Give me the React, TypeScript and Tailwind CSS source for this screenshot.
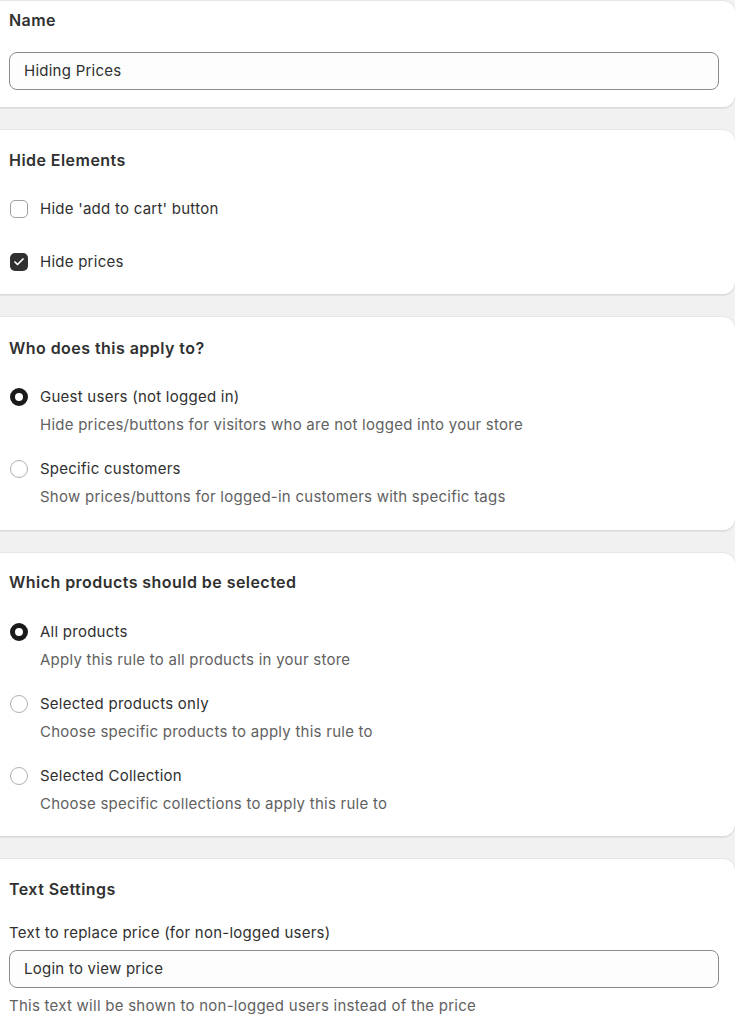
import { Check } from "lucide-react";

const card =
  "bg-white rounded-r-xl pl-[9px] pr-4 shadow-[0_1px_0_0_rgba(26,26,26,0.07),inset_0_-1px_0_0_rgba(0,0,0,0.14),inset_0_1px_0_0_rgba(204,204,204,0.5)]";

const body = "text-[15px] leading-[22px] tracking-[0.25px]";

function Heading({ children }: { children: React.ReactNode }) {
  return (
    <h2 className="text-[16px] leading-[22px] font-semibold tracking-[0.45px] text-[#303030]">
      {children}
    </h2>
  );
}

function TextInput({ value }: { value: string }) {
  return (
    <div
      className={`h-[38px] w-[710px] rounded-lg border border-[#8a8a8a] bg-[#fdfdfd] pl-[14px] flex items-center text-[#303030] ${body}`}
    >
      {value}
    </div>
  );
}

function Checkbox({ label, checked }: { label: string; checked?: boolean }) {
  return (
    <div className="flex items-center gap-3 h-[22px] pl-px">
      {checked ? (
        <span className="w-[18px] h-[18px] rounded-[5px] bg-[#303030] flex items-center justify-center">
          <Check size={12} strokeWidth={3.5} color="white" />
        </span>
      ) : (
        <span className="w-[18px] h-[18px] rounded-[5px] border border-[#a0a0a0] bg-white" />
      )}
      <span className={`text-[#303030] ${body}`}>{label}</span>
    </div>
  );
}

function Radio({
  label,
  help,
  checked,
}: {
  label: string;
  help: string;
  checked?: boolean;
}) {
  return (
    <div>
      <div className="flex items-center gap-3 h-[22px] pl-px">
        {checked ? (
          <span className="w-[18px] h-[18px] rounded-full border-[5px] border-[#1a1a1a] bg-white" />
        ) : (
          <span className="w-[18px] h-[18px] rounded-full border border-[#b0b0b0] bg-white" />
        )}
        <span className={`text-[#303030] ${body}`}>{label}</span>
      </div>
      <p className={`mt-[6px] pl-[31px] text-[#616161] ${body}`}>{help}</p>
    </div>
  );
}

export default function App() {
  return (
    <div
      className="min-h-screen bg-[#f1f1f1] flex flex-col gap-[21px] pb-8"
      style={{ fontFamily: "Inter, 'Noto Sans', sans-serif" }}
    >
      <section className={`${card} pt-[9px] pb-[18px]`}>
        <Heading>Name</Heading>
        <div className="mt-[21px]">
          <TextInput value="Hiding Prices" />
        </div>
      </section>

      <section className={`${card} pt-[20px] pb-[22px]`}>
        <Heading>Hide Elements</Heading>
        <div className="mt-[27px] flex flex-col gap-[31px]">
          <Checkbox label="Hide 'add to cart' button" />
          <Checkbox label="Hide prices" checked />
        </div>
      </section>

      <section className={`${card} pt-[21px] pb-[23px]`}>
        <Heading>Who does this apply to?</Heading>
        <div className="mt-[27px] flex flex-col gap-[22px]">
          <Radio
            label="Guest users (not logged in)"
            help="Hide prices/buttons for visitors who are not logged into your store"
            checked
          />
          <Radio
            label="Specific customers"
            help="Show prices/buttons for logged-in customers with specific tags"
          />
        </div>
      </section>

      <section className={`${card} pt-[19px] pb-[22px]`}>
        <Heading>Which products should be selected</Heading>
        <div className="mt-[28px] flex flex-col gap-[22px]">
          <Radio
            label="All products"
            help="Apply this rule to all products in your store"
            checked
          />
          <Radio
            label="Selected products only"
            help="Choose specific products to apply this rule to"
          />
          <Radio
            label="Selected Collection"
            help="Choose specific collections to apply this rule to"
          />
        </div>
      </section>

      <section className={`${card} pt-[20px] pb-[24px]`}>
        <Heading>Text Settings</Heading>
        <p className={`mt-[22px] text-[#303030] ${body}`}>
          Text to replace price (for non-logged users)
        </p>
        <div className="mt-[6px]">
          <TextInput value="Login to view price" />
        </div>
        <p className={`mt-[7px] text-[#616161] ${body}`}>
          This text will be shown to non-logged users instead of the price
        </p>
      </section>
    </div>
  );
}
